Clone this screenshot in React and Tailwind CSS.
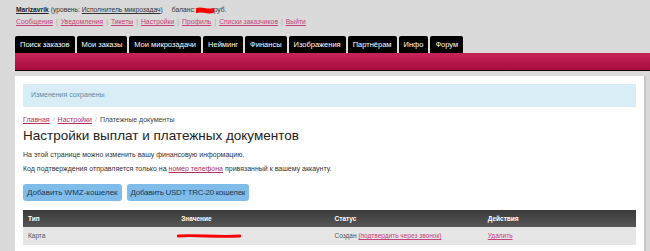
import React from 'react';

const tabs = ['Поиск заказов', 'Мои заказы', 'Мои микрозадачи', 'Нейминг', 'Финансы', 'Изображения', 'Партнёрам', 'Инфо', 'Форум'];
const links = ['Сообщения', 'Уведомления', 'Тикеты', 'Настройки', 'Профиль', 'Списки заказчиков', 'Выйти'];

const Scribble = ({ w, h }) => (
  <svg width={w} height={h} viewBox={`0 0 ${w} ${h}`} className="inline-block align-middle">
    <path d={`M1 ${h / 2} C ${w * 0.3} ${h * 0.2}, ${w * 0.6} ${h * 0.8}, ${w - 1} ${h / 2}`} stroke="#ff0000" strokeWidth={h * 0.7} strokeLinecap="round" fill="none" />
  </svg>
);

const App = () => {
  return (
    <div className="min-h-[251px] bg-[#dadada] font-['Liberation_Sans',Arial,sans-serif] pt-[5px]">
      {/* Header */}
      <div className="pl-[16px] text-[7px] leading-[10px] text-[#333]">
        <div className="flex items-center text-[6.7px]">
          <a className="font-bold underline text-[#222]">Marizavrik</a>
          <span className="ml-[2px]">(уровень: <a className="underline">Исполнитель микрозадач</a>)</span>
          <span className="ml-[9px]">баланс:</span>
          <Scribble w={18} h={7} />
          <span>руб.</span>
        </div>
        <div className="flex items-center mt-[2px] text-[6.8px]">
          {links.map((l, i) => (
            <span key={l} className="flex items-center">
              {i > 0 && <span className="mx-[3px] text-[#aaa]">|</span>}
              <a className="underline text-[#c8407a]">{l}</a>
            </span>
          ))}
        </div>
      </div>

      {/* Tabs */}
      <div className="flex gap-[2px] pl-[15px] mt-[9px]">
        {tabs.map((t) => (
          <div key={t} className="bg-black text-white text-[7.5px] leading-[17px] h-[17px] px-[5px] rounded-t-[2px] whitespace-nowrap">
            {t}
          </div>
        ))}
      </div>
      <div className="ml-[15px] h-[18px] bg-gradient-to-b from-[#c82358] to-[#a80b3f] border-b border-[#1a0008]"></div>

      {/* Content panel */}
      <div className="ml-[15px] mr-[4px] mt-[5px] bg-white border-r-[2px] border-[#c8c8c8] px-[8px] pt-[8px] pb-[6px]">
        <div className="bg-[#d9edf7] h-[23px] flex items-center px-[8px] text-[7px] text-[#5a8ea8]">
          Изменения сохранены
        </div>

        <div className="mt-[8px] text-[7px] leading-[10px] text-[#444]">
          <a className="underline text-[#b0305e]">Главная</a>
          <span className="mx-[3px] text-[#bbb]">/</span>
          <a className="underline text-[#b0305e]">Настройки</a>
          <span className="mx-[3px] text-[#bbb]">/</span>
          <span>Платежные документы</span>
        </div>

        <h1 className="mt-[2px] text-[13.5px] leading-[18px] text-[#222]">Настройки выплат и платежных документов</h1>

        <p className="mt-[5px] text-[7px] leading-[10px] text-[#333]">На этой странице можно изменить вашу финансовую информацию.</p>
        <p className="mt-[4px] text-[7px] leading-[10px] text-[#333]">
          Код подтверждения отправляется только на <a className="underline text-[#b0305e]">номер телефона</a> привязанный к вашему аккаунту.
        </p>

        <div className="flex gap-[5px] mt-[10px]">
          <button className="bg-[#7fbcea] text-[#1d3a55] text-[8px] h-[17px] px-[4px] rounded-[3px]">Добавить WMZ-кошелек</button>
          <button className="bg-[#7fbcea] text-[#1d3a55] text-[8px] tracking-[-0.3px] h-[17px] px-[4px] rounded-[3px]">Добавить USDT TRC-20 кошелек</button>
        </div>

        <table className="w-full mt-[9px] table-fixed text-[6.5px] border-collapse">
          <thead>
            <tr className="bg-gradient-to-b from-[#3a3a3a] to-[#575757] text-white h-[17px]">
              <th className="text-left font-bold pl-[5px]">Тип</th>
              <th className="text-left font-bold pl-[5px]">Значение</th>
              <th className="text-left font-bold pl-[5px]">Статус</th>
              <th className="text-left font-bold pl-[5px]">Действия</th>
            </tr>
          </thead>
          <tbody>
            <tr className="bg-[#e6e6e6] text-[#555] h-[18px]">
              <td className="pl-[5px]">Карта</td>
              <td className="pl-[1px]"><Scribble w={64} h={4} /></td>
              <td className="pl-[5px]">Создан <a className="underline text-[#c8407a]">(подтвердить через звонок)</a></td>
              <td className="pl-[5px]"><a className="underline text-[#c8407a]">Удалить</a></td>
            </tr>
          </tbody>
        </table>
      </div>
    </div>
  );
};

export default App;
